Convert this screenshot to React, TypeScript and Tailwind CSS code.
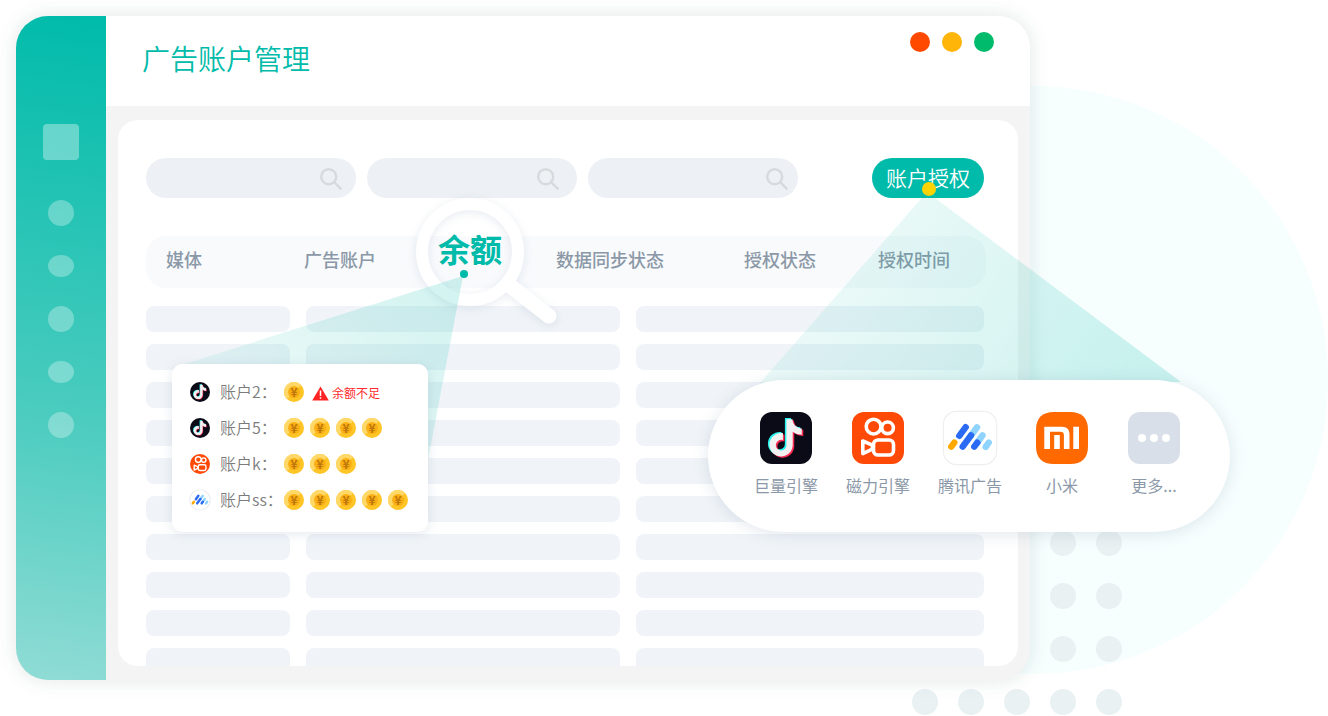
import type { ReactNode } from "react";

type LogoProps = { round?: boolean };

const NOTE =
  "M12.525.02c1.31-.02 2.61-.01 3.91-.02.08 1.53.63 3.09 1.75 4.17 1.12 1.11 2.7 1.62 4.24 1.79v4.03c-1.44-.05-2.89-.35-4.2-.97-.57-.26-1.1-.59-1.62-.93-.01 2.92.01 5.84-.02 8.75-.08 1.4-.54 2.79-1.35 3.94-1.31 1.92-3.58 3.17-5.91 3.21-1.43.08-2.86-.31-4.08-1.03-2.02-1.19-3.44-3.37-3.65-5.71-.02-.5-.03-1-.01-1.49.18-1.9 1.12-3.72 2.58-4.96 1.66-1.44 3.98-2.13 6.15-1.72.02 1.48-.04 2.96-.04 4.44-.99-.32-2.15-.23-3.02.37-.63.41-1.11 1.04-1.36 1.75-.21.51-.15 1.07-.14 1.61.24 1.64 1.82 3.02 3.5 2.87 1.12-.01 2.19-.66 2.77-1.61.19-.33.4-.67.41-1.06.1-1.79.06-3.57.07-5.36.01-4.03-.01-8.05.02-12.07z";

function DouyinLogo({ round }: LogoProps) {
  return (
    <svg viewBox="0 0 52 52" className="size-full" aria-hidden="true">
      <rect width="52" height="52" rx={round ? 26 : 12} fill="#0b0b17" />
      <path d={NOTE} transform="translate(5.5 6) scale(1.55)" fill="#25f4ee" />
      <path d={NOTE} transform="translate(8.5 8.5) scale(1.55)" fill="#fe2c55" />
      <path d={NOTE} transform="translate(7 7.2) scale(1.55)" fill="#f1f1f1" />
    </svg>
  );
}

function KuaishouLogo({ round }: LogoProps) {
  return (
    <svg viewBox="0 0 52 52" className="size-full" aria-hidden="true">
      <rect width="52" height="52" rx={round ? 26 : 12} fill="#ff4906" />
      <g fill="none" stroke="#fff" strokeWidth="3.6" strokeLinejoin="round">
        <circle cx="21.6" cy="14.6" r="7.4" />
        <circle cx="35.6" cy="15.8" r="5.8" />
        <rect x="21.5" y="28" width="20" height="15" rx="4.5" />
        <path d="M10.8 29v12.6l9.6-4.4v-4z" />
      </g>
    </svg>
  );
}

function TencentAdsLogo({ round }: LogoProps) {
  return (
    <svg viewBox="0 0 52 52" className="size-full overflow-visible" aria-hidden="true">
      <rect x="-.6" y="-.6" width="53.2" height="53.2" rx={round ? 27 : 13} fill="#fff" stroke="#eeeff1" strokeWidth={round ? 3 : 1.2} />
      <g strokeWidth="6.4" strokeLinecap="round">
        <path d="M27 23.5 33 15.3M33 31l5.5-7.6M41.7 34.8l3-4.2" stroke="#8fd3ff" />
        <path d="m15.3 23.8 6.4-8.6M18.7 34.7 27 23.4M30.3 34.7l3-4" stroke="#2b6bf3" />
        <path d="m7.3 34.6 3-4" stroke="#ffa800" />
      </g>
    </svg>
  );
}

function XiaomiLogo() {
  return (
    <svg viewBox="0 0 52 52" className="size-full" aria-hidden="true">
      <path d="M18 0h16c12 0 18 6 18 18v16c0 12-6 18-18 18H18C6 52 0 46 0 34V18C0 6 6 0 18 0Z" fill="#ff6900" />
      <path d="M8.3 14.8h17.4c5.2 0 7.8 2.7 7.8 7.7V37h-5.6V23c0-2.3-1-3.3-3.5-3.3H14V37H8.3ZM18.2 23h5.6v14h-5.6ZM37.3 14.8H43V37h-5.7Z" fill="#fff" />
    </svg>
  );
}

function MoreLogo() {
  return (
    <svg viewBox="0 0 52 52" className="size-full" aria-hidden="true">
      <rect width="52" height="52" rx="12" fill="#d9dfe8" />
      <g fill="#fff">
        <circle cx="14" cy="26" r="4" />
        <circle cx="26" cy="26" r="4" />
        <circle cx="38" cy="26" r="4" />
      </g>
    </svg>
  );
}

function Coin() {
  return (
    <svg viewBox="0 0 20 20" className="size-5" aria-hidden="true">
      <circle cx="10" cy="10" r="10" fill="#ffc425" />
      <path d="M2.9 17.1A10 10 0 0 1 17.1 2.9Z" fill="#ffd868" />
      <circle cx="10" cy="10" r="6" fill="#faaf14" />
      <text x="10" y="14.5" textAnchor="middle" fontSize="12" fontWeight="700" fill="#bd760b">¥</text>
    </svg>
  );
}

function SearchIcon() {
  return (
    <svg viewBox="0 0 22 22" className="mt-0.5 size-[22px] shrink-0" fill="none" stroke="#d6dadd" strokeWidth="2.4" aria-hidden="true">
      <circle cx="8.7" cy="8.7" r="7.5" />
      <path d="m14 14 7.400 7.400" />
    </svg>
  );
}

const searches = [
  { label: "媒体", pad: "pr-[14px]" },
  { label: "广告账户", pad: "pr-[18px]" },
  { label: "状态", pad: "pr-[10px]" },
];

const columns = [
  { name: "媒体", className: "w-[158px] pl-5" },
  { name: "广告账户", className: "w-[134px]" },
  { name: "余额", className: "w-[118px]", active: true },
  { name: "数据同步状态", className: "w-[188px]" },
  { name: "授权状态", className: "w-[134px]" },
  { name: "授权时间", className: "w-[108px]" },
];

const balances = [
  { name: "账户2", logo: <DouyinLogo round />, coins: 1, warning: "余额不足" },
  { name: "账户5", logo: <DouyinLogo round />, coins: 4 },
  { name: "账户k", logo: <KuaishouLogo round />, coins: 3 },
  { name: "账户ss", logo: <TencentAdsLogo round />, coins: 5 },
];

const platforms: { name: string; logo: ReactNode }[] = [
  { name: "巨量引擎", logo: <DouyinLogo /> },
  { name: "磁力引擎", logo: <KuaishouLogo /> },
  { name: "腾讯广告", logo: <TencentAdsLogo /> },
  { name: "小米", logo: <XiaomiLogo /> },
  { name: "更多...", logo: <MoreLogo /> },
];

const navHeights = ["h-[26px]", "h-[22px]", "h-[26px]", "h-[22px]", "h-[26px]"];

function Backdrop() {
  return (
    <div aria-hidden="true">
      <div className="absolute top-[86px] right-0 size-[588px] rounded-full bg-[#f7fefe]" />
      <div className="absolute top-[530px] right-[206px] flex flex-col items-end gap-[27px]">
        {[2, 2, 2, 5].map((count, row) => (
          <div key={row} className="flex gap-5">
            {Array.from({ length: count }, (_, i) => (
              <span key={i} className="size-[26px] rounded-full bg-[#e9f1f3]" />
            ))}
          </div>
        ))}
      </div>
    </div>
  );
}

function Sidebar() {
  return (
    <nav className="flex w-[90px] shrink-0 flex-col items-center bg-linear-[188deg] from-[#00bbaa] via-[#4bccbf] via-60% to-[#90dcd5] pt-[108px]">
      <button aria-label="首页" className="size-9 rounded bg-white/35" />
      <div className="mt-10 flex flex-col gap-[29px]">
        {navHeights.map((height, i) => (
          <button key={i} aria-label={`菜单 ${i + 1}`} className={`w-[26px] rounded-[50%] bg-white/30 ${height}`} />
        ))}
      </div>
    </nav>
  );
}

function Magnifier() {
  return (
    <svg viewBox="0 0 160 150" className="absolute -top-12 left-[260px] h-[150px] w-[160px] overflow-visible drop-shadow-[0_2px_5px_rgba(110,130,165,0.16)]" fill="none" stroke="#fff" aria-hidden="true">
      <circle cx="64" cy="64" r="48" strokeWidth="12" />
      <path d="M103 97 143 128" strokeWidth="15" strokeLinecap="round" />
    </svg>
  );
}

function BalancePopup() {
  return (
    <div className="absolute top-9 left-[26px] w-[292px]">
      <svg viewBox="0 0 292 190" className="block h-[190px] w-[292px] overflow-visible" aria-hidden="true">
        <defs>
          <linearGradient id="balanceBeam" x1="1" y1="0" x2="0" y2=".6">
            <stop offset="0" stopColor="#00bbaa" stopOpacity=".18" />
            <stop offset="1" stopColor="#00bbaa" stopOpacity=".06" />
          </linearGradient>
        </defs>
        <path d="M291 4 0 96 256 188Z" fill="url(#balanceBeam)" />
        <circle cx="292" cy="2" r="4" fill="#00bbaa" />
      </svg>
      <ul className="absolute top-[92px] left-0 flex w-64 flex-col gap-4 rounded-[10px] bg-white p-[18px] pb-[22px] text-base leading-5 font-[350] text-[#7c7c7c] shadow-[0_2px_12px_rgba(90,115,150,0.16)]">
        {balances.map((item) => (
          <li key={item.name} className="flex h-5 items-center">
            <span className="size-5">{item.logo}</span>
            <span className="ml-[10px] w-16 pb-0.5 whitespace-nowrap">{item.name}：</span>
            <span className="flex gap-1.5">
              {Array.from({ length: item.coins }, (_, i) => (
                <Coin key={i} />
              ))}
            </span>
            {item.warning && (
              <span className="ml-2 flex items-center gap-[3px] pt-0.5 text-xs font-normal text-[#ff2b2b]">
                <svg viewBox="0 0 17 15" className="h-[15px] w-[17px]" aria-hidden="true">
                  <path d="M8.5.5 16.8 14.5H.2Z" fill="#ff2424" />
                  <path d="M8.500 4.500V10M8.500 11.300v1.500" stroke="#fff" strokeWidth="1.5" />
                </svg>
                {item.warning}
              </span>
            )}
          </li>
        ))}
      </ul>
    </div>
  );
}

function AccountPanel() {
  return (
    <section className="h-[546px] overflow-hidden rounded-[20px] bg-white px-7 pt-[38px]">
      <div className="flex items-center justify-between pr-1.5">
        <div className="flex gap-[11px]">
          {searches.map((search) => (
            <label key={search.label} className={`flex h-10 w-[210px] items-center rounded-full bg-[#edf1f5] pl-5 ${search.pad}`}>
              <input type="search" aria-label={search.label} className="min-w-0 flex-1 bg-transparent outline-none" />
              <SearchIcon />
            </label>
          ))}
        </div>
        <button className="relative h-10 w-28 rounded-full bg-[#00bbaa] pb-0.5 text-[21px] leading-[38px] font-[350] whitespace-nowrap text-white">
          账户授权
          <span className="absolute top-6 left-[50px] size-[14px] rounded-full bg-[#ffd400]" />
        </button>
      </div>

      <div className="relative z-10 mt-[38px] mr-1 rounded-[20px] bg-[#f8fafc]">
        <Magnifier />
        <table className="relative w-full table-fixed text-left">
          <thead>
            <tr className="h-[52px] text-lg leading-6 whitespace-nowrap text-[#8b98a7]">
              {columns.map((column) => (
                <th key={column.name} scope="col" className={`font-medium ${column.className}`}>
                  {column.active ? (
                    <span className="block pb-7 text-[32px] leading-6 font-bold text-[#00bbaa]">{column.name}</span>
                  ) : (
                    <span className="block pb-1.5">{column.name}</span>
                  )}
                </th>
              ))}
            </tr>
          </thead>
        </table>
        <BalancePopup />
      </div>

      <div className="mt-[18px] flex flex-col gap-3 pr-1.5" aria-hidden="true">
        {Array.from({ length: 10 }, (_, row) => (
          <div key={row} className="grid grid-cols-[144fr_314fr_348fr] gap-4">
            <span className="h-[26px] rounded-lg bg-[#f0f4f8]" />
            <span className="h-[26px] rounded-lg bg-[#f0f4f8]" />
            <span className="h-[26px] rounded-lg bg-[#f0f4f8]" />
          </div>
        ))}
      </div>
    </section>
  );
}

function PlatformPicker() {
  return (
    <div className="absolute top-[192px] right-[98px] z-20 w-[522px] pt-[188px]">
      <svg viewBox="0 0 522 192" className="absolute top-0 left-0 h-[192px] w-[522px]" aria-hidden="true">
        <defs>
          <linearGradient id="platformBeam" x1="0" y1=".2" x2="1" y2=".5">
            <stop offset="0" stopColor="#00bbaa" stopOpacity=".05" />
            <stop offset="1" stopColor="#00bbaa" stopOpacity=".19" />
          </linearGradient>
        </defs>
        <path d="M219 0 52 191 473 190Z" fill="url(#platformBeam)" />
      </svg>
      <ul className="relative flex h-[152px] rounded-full bg-white pt-8 pl-8 shadow-[0_2px_16px_rgba(90,115,150,0.18)]">
        {platforms.map((platform) => (
          <li key={platform.name} className="w-[92px]">
            <button className="flex w-full flex-col items-center gap-[9px] text-base leading-6 whitespace-nowrap text-[#8b98a7]">
              <span className="size-[52px]">{platform.logo}</span>
              {platform.name}
            </button>
          </li>
        ))}
      </ul>
    </div>
  );
}

export default function App() {
  return (
    <div className="relative min-h-screen overflow-hidden bg-white p-4 font-['Noto_Sans_CJK_SC','Noto_Sans',sans-serif]">
      <Backdrop />
      <main className="relative mr-[282px] flex min-w-[1014px] overflow-hidden rounded-[32px] bg-[#f4f4f4] shadow-[0_0_20px_rgba(20,80,70,0.13)]">
        <Sidebar />
        <div className="min-w-0 flex-1">
          <header className="flex h-[90px] items-start justify-between bg-white pt-4 pr-9 pl-9">
            <h1 className="pt-1.5 text-[28px] leading-10 font-[350] text-[#00bbaa]">广告账户管理</h1>
            <div className="flex gap-3">
              <button aria-label="关闭" className="size-5 rounded-full bg-[#ff4800]" />
              <button aria-label="最小化" className="size-5 rounded-full bg-[#ffb408]" />
              <button aria-label="最大化" className="size-5 rounded-full bg-[#00bb6b]" />
            </div>
          </header>
          <div className="px-3 py-3.5">
            <AccountPanel />
          </div>
        </div>
      </main>
      <PlatformPicker />
    </div>
  );
}
